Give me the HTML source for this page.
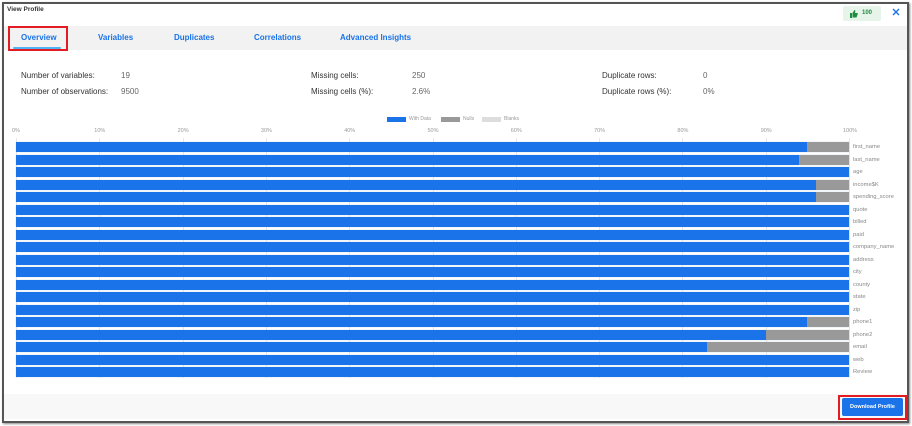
<!DOCTYPE html><html><head><style>
*{margin:0;padding:0;box-sizing:border-box}
body{width:912px;height:426px;background:#fff;font-family:"Liberation Sans",sans-serif;position:relative;overflow:hidden}
.a{position:absolute}
.frame{left:2px;top:2px;width:907px;height:421px;border:2px solid #555;box-shadow:1px 1px 2px #888}
.t{font-size:8px;color:#1a73e8;font-weight:bold;top:33px}
.s{font-size:8px;color:#333}
.v{font-size:8px;color:#666}
.ax{font-size:5.5px;color:#999;top:128px}
.lb{font-size:5.8px;color:#888;left:853px}
.g{width:1px;background:#e6e6e6;top:138px;height:240px}
</style></head><body>
<div class="a frame"></div>
<div class="a" style="left:7px;top:6px;font-size:6.5px;font-weight:bold;color:#333">View Profile</div>
<div class="a" style="left:843px;top:6px;width:38px;height:15px;background:#e6f4ea;border-radius:2px"></div>
<svg class="a" style="left:850px;top:10px" width="8" height="8" viewBox="0 0 8 8"><rect x="0" y="3" width="2" height="5" fill="#1e8e3e"/><path d="M2.5 3 L4.5 0 Q5.5 0 5.3 1.5 L5 3 H7.5 Q8 3.5 7.6 4.5 L6.5 7.5 H2.5Z" fill="#1e8e3e"/></svg>
<div class="a" style="left:862px;top:10px;font-size:6px;font-weight:bold;color:#1e8e3e">100</div>
<svg class="a" style="left:892px;top:8px" width="8" height="8" viewBox="0 0 8 8"><path d="M1 1L7 7M7 1L1 7" stroke="#1a73e8" stroke-width="1.4"/></svg>
<div class="a" style="left:4px;top:26px;width:903px;height:24px;background:#f2f2f2"></div>
<div class="a" style="left:8px;top:26px;width:60px;height:25px;border:2px solid #e31b23"></div>
<div class="a" style="left:13px;top:47px;width:48px;height:2px;background:#4fb3f6;border-radius:1px"></div>
<div class="a t" style="left:21px">Overview</div>
<div class="a t" style="left:98px">Variables</div>
<div class="a t" style="left:174px">Duplicates</div>
<div class="a t" style="left:254px">Correlations</div>
<div class="a t" style="left:340px">Advanced Insights</div>
<div class="a s" style="left:21px;top:71px">Number of variables:</div>
<div class="a v" style="left:121px;top:71px">19</div>
<div class="a s" style="left:21px;top:87px">Number of observations:</div>
<div class="a v" style="left:121px;top:87px">9500</div>
<div class="a s" style="left:311px;top:71px">Missing cells:</div>
<div class="a v" style="left:412px;top:71px">250</div>
<div class="a s" style="left:311px;top:87px">Missing cells (%):</div>
<div class="a v" style="left:412px;top:87px">2.6%</div>
<div class="a s" style="left:602px;top:71px">Duplicate rows:</div>
<div class="a v" style="left:703px;top:71px">0</div>
<div class="a s" style="left:602px;top:87px">Duplicate rows (%):</div>
<div class="a v" style="left:703px;top:87px">0%</div>
<div class="a" style="left:387px;top:117px;width:19px;height:5px;background:#1a73e8"></div>
<div class="a" style="left:409px;top:116px;font-size:5px;color:#999">With Data</div>
<div class="a" style="left:441px;top:117px;width:19px;height:5px;background:#999"></div>
<div class="a" style="left:463px;top:116px;font-size:5px;color:#999">Nulls</div>
<div class="a" style="left:482px;top:117px;width:19px;height:5px;background:#ddd"></div>
<div class="a" style="left:504px;top:116px;font-size:5px;color:#999">Blanks</div>
<div id="c"></div>
<div class="a" style="left:4px;top:394px;width:903px;height:25px;background:#f8f8f8"></div>
<div class="a" style="left:838px;top:395px;width:69px;height:25px;border:2px solid #e31b23"></div>
<div class="a" style="left:842px;top:398px;width:61px;height:18px;background:#1a73e8;border-radius:2px;color:#fff;font-size:5.5px;font-weight:bold;text-align:center;line-height:18px">Download Profile</div>
<script>
var h='';
for(var i=0;i<=10;i++){var x=16+i*83.3;h+='<div class="a g" style="left:'+x+'px"></div><div class="a ax" style="left:'+(x-(i==0?4:(i==10?6:5)))+'px">'+(i*10)+'%</div>';}
var r=[['first_name',.95],['last_name',.94],['age',1],['income$K',.96],['spending_score',.96],['quote',1],['billed',1],['paid',1],['company_name',1],['address',1],['city',1],['county',1],['state',1],['zip',1],['phone1',.95],['phone2',.9],['email',.83],['web',1],[' Review',1]];
r.forEach(function(e,i){var y=142+i*12.5;var w=833;
h+='<div class="a" style="left:16px;top:'+y+'px;width:'+w+'px;height:10px;background:#999;box-shadow:0 0 1px #bcd"></div>';
h+='<div class="a" style="left:16px;top:'+y+'px;width:'+(w*e[1])+'px;height:10px;background:#1a73e8"></div>';
h+='<div class="a lb" style="top:'+(y+2)+'px">'+e[0]+'</div>';});
document.getElementById('c').innerHTML=h;
</script>
</body></html>
